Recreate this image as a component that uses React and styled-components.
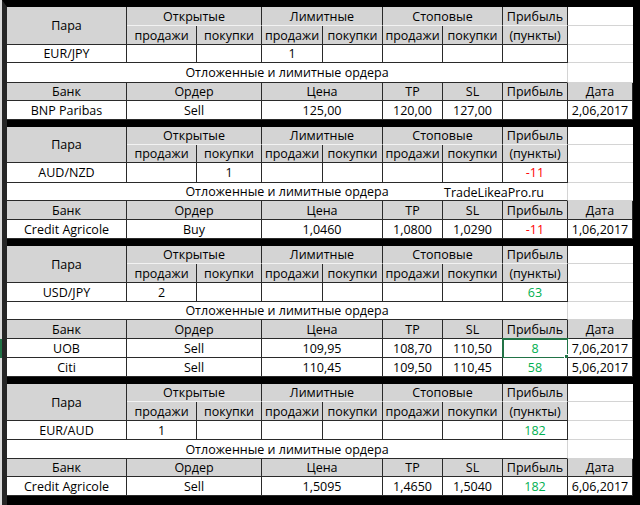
import React from "react";
import styled, { createGlobalStyle, css } from "styled-components";

const Global = createGlobalStyle`
  html, body { margin: 0; padding: 0; background: #fff; }
  body { font-family: "Open Sans", "Liberation Sans", sans-serif; }
  * { box-sizing: border-box; }
`;

const DARK = "#2a2a2a";
const GRID = "#d4d4d4";
const HEAD = "#d4d4d4";

const Sheet = styled.div`
  display: flex;
  width: 640px;
  height: 505px;
  overflow: hidden;
`;

const Gutter = styled.div`
  position: relative;
  flex: none;
  width: 2px;
  background: #dadada;
`;

const RowMarker = styled.div`
  position: absolute;
  left: 0;
  width: 2px;
  background: #217346;
`;

const Body = styled.div`
  flex: 1;
  display: flex;
  flex-direction: column;
  gap: 7px;
  background: #000;
  border-left: 5px solid #262626;
  border-right: 7px solid #000;
  border-top: 7px solid #000;
`;

const Section = styled.div`
  display: grid;
  grid-template-columns: 120px 70px 65px 61px 60px 60px 60px 65px 65px;
  grid-template-rows: ${(p) => p.$rows};
  background: #fff;
`;

const Cell = styled.div`
  position: relative;
  display: flex;
  align-items: center;
  justify-content: center;
  padding-top: 2px;
  font-size: 12.5px;
  line-height: 1;
  color: #000;
  white-space: nowrap;
  background: ${(p) => (p.$head ? HEAD : "#fff")};
  border-right: 1px solid ${(p) => (p.$soft ? GRID : DARK)};
  border-bottom: 1px solid ${(p) => (p.$split ? "#f2f2f2" : p.$plain ? GRID : DARK)};
  ${(p) => p.$plain && css`border-right: none;`}
  grid-column: span ${(p) => p.$span || 1};
  grid-row: span ${(p) => p.$rowSpan || 1};
  ${(p) => p.$tone === "red" && css`color: #ff0000;`}
  ${(p) => p.$tone === "green" && css`color: #00b050;`}
  ${(p) =>
    p.$selected &&
    css`
      &::before {
        content: "";
        position: absolute;
        left: -1px;
        top: -1px;
        right: -2px;
        bottom: -2px;
        border: 2px solid #217346;
      }
      &::after {
        content: "";
        position: absolute;
        right: -4px;
        bottom: -4px;
        width: 5px;
        height: 5px;
        background: #217346;
        border: 1px solid #fff;
      }
    `}
`;

const Watermark = styled.span`
  position: absolute;
  left: 437px;
  top: 50%;
  transform: translateY(-50%);
  margin-top: 1px;
  font-size: 12.5px;
  color: #000;
`;

function HeaderRows() {
  return (
    <>
      <Cell $head $rowSpan={2}>Пара</Cell>
      <Cell $head $span={2} $split>Открытые</Cell>
      <Cell $head $span={2} $split>Лимитные</Cell>
      <Cell $head $span={2} $split>Стоповые</Cell>
      <Cell $head $split>Прибыль</Cell>
      <Cell $plain />
      {["продажи", "покупки", "продажи", "покупки", "продажи", "покупки"].map((t, i) => (
        <Cell $head key={i}>{t}</Cell>
      ))}
      <Cell $head>(пункты)</Cell>
      <Cell $plain />
    </>
  );
}

function PairRow({ pair, values, profit, tone }) {
  return (
    <>
      <Cell>{pair}</Cell>
      {values.map((v, i) => (
        <Cell key={i}>{v}</Cell>
      ))}
      <Cell $tone={tone}>{profit}</Cell>
      <Cell $plain />
    </>
  );
}

function PendingRow({ watermark }) {
  return (
    <>
      <Cell $span={8} $soft>
        Отложенные и лимитные ордера
        {watermark && <Watermark>TradeLikeaPro.ru</Watermark>}
      </Cell>
      <Cell $plain />
    </>
  );
}

function OrderHead() {
  return (
    <>
      <Cell $head>Банк</Cell>
      <Cell $head $span={2}>Ордер</Cell>
      <Cell $head $span={2}>Цена</Cell>
      <Cell $head>TP</Cell>
      <Cell $head>SL</Cell>
      <Cell $head>Прибыль</Cell>
      <Cell $head>Дата</Cell>
    </>
  );
}

function OrderRow({ o }) {
  return (
    <>
      <Cell>{o.bank}</Cell>
      <Cell $span={2}>{o.order}</Cell>
      <Cell $span={2}>{o.price}</Cell>
      <Cell>{o.tp}</Cell>
      <Cell>{o.sl}</Cell>
      <Cell $tone={o.tone} $selected={o.selected}>{o.profit}</Cell>
      <Cell>{o.date}</Cell>
    </>
  );
}

const blocks = [
  {
    rows: "19px 19px 18px 20px 18px 19px",
    pair: "EUR/JPY",
    values: ["", "", "1", "", "", ""],
    profit: "",
    orders: [
      { bank: "BNP Paribas", order: "Sell", price: "125,00", tp: "120,00", sl: "127,00", profit: "", date: "2,06,2017" },
    ],
  },
  {
    rows: "18px 18px 20px 18px 19px 19px",
    pair: "AUD/NZD",
    values: ["", "1", "", "", "", ""],
    profit: "-11",
    tone: "red",
    watermark: true,
    orders: [
      { bank: "Credit Agricole", order: "Buy", price: "1,0460", tp: "1,0800", sl: "1,0290", profit: "-11", tone: "red", date: "1,06,2017" },
    ],
  },
  {
    rows: "18px 19px 19px 18px 19px 19px 19px",
    pair: "USD/JPY",
    values: ["2", "", "", "", "", ""],
    profit: "63",
    tone: "green",
    orders: [
      { bank: "UOB", order: "Sell", price: "109,95", tp: "108,70", sl: "110,50", profit: "8", tone: "green", date: "7,06,2017", selected: true },
      { bank: "Citi", order: "Sell", price: "110,45", tp: "109,50", sl: "110,45", profit: "58", tone: "green", date: "5,06,2017" },
    ],
  },
  {
    rows: "18px 19px 19px 19px 18px 19px",
    pair: "EUR/AUD",
    values: ["1", "", "", "", "", ""],
    profit: "182",
    tone: "green",
    orders: [
      { bank: "Credit Agricole", order: "Sell", price: "1,5095", tp: "1,4650", sl: "1,5040", profit: "182", tone: "green", date: "6,06,2017" },
    ],
  },
];

export default function App() {
  return (
    <Sheet>
      <Global />
      <Gutter>
        <RowMarker style={{ top: 339, height: 19 }} />
      </Gutter>
      <Body>
        {blocks.map((b, i) => (
          <Section key={i} $rows={b.rows}>
            <HeaderRows />
            <PairRow pair={b.pair} values={b.values} profit={b.profit} tone={b.tone} />
            <PendingRow watermark={b.watermark} />
            <OrderHead />
            {b.orders.map((o, j) => (
              <OrderRow key={j} o={o} />
            ))}
          </Section>
        ))}
      </Body>
    </Sheet>
  );
}
